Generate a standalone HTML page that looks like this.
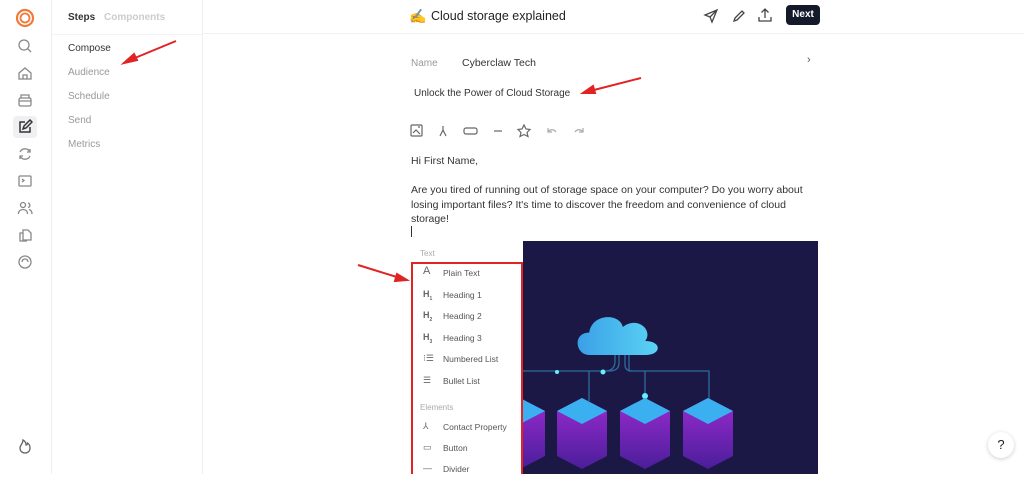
<!DOCTYPE html>
<html><head><meta charset="utf-8"><style>
*{margin:0;padding:0;box-sizing:border-box}
body{width:1024px;height:474px;overflow:hidden;background:#fff;font-family:"Liberation Sans",sans-serif;position:relative;color:#222}
.abs{position:absolute}
.rail{left:0;top:0;width:52px;height:474px;border-right:1px solid #eee;background:#fff}
.ri{position:absolute;left:17px;width:16px;height:16px}
.steps{left:52px;top:0;width:151px;height:474px;border-right:1px solid #eee}
.s{position:absolute;left:16px;font-size:10px;color:#999}
.hdr{left:203px;top:0;right:0;height:34px;border-bottom:1px solid #f0f0f0}
.t{font-size:11px;color:#333}
.mi{position:absolute;left:0;width:110px;font-size:8.5px;color:#555;height:20px}
.mi span{position:absolute;left:33px;top:5px}
.mi i{position:absolute;left:13px;top:4px;font-style:normal;font-size:9px;color:#666;font-weight:bold}
</style></head><body>
<div class="abs rail">
 <svg class="ri" style="top:8px;left:15px;width:20px;height:20px" viewBox="0 0 20 20"><circle cx="10" cy="10" r="8" fill="none" stroke="#f07a3a" stroke-width="2.2"/><circle cx="10" cy="10" r="4.5" fill="none" stroke="#f07a3a" stroke-width="1.8"/></svg>
 <svg class="ri" style="top:38px" viewBox="0 0 16 16" fill="none" stroke="#888" stroke-width="1.3"><circle cx="7" cy="7" r="5"/><path d="M11 11l3 3"/></svg>
 <svg class="ri" style="top:65px" viewBox="0 0 16 16" fill="none" stroke="#888" stroke-width="1.3"><path d="M2 8l6-5 6 5v6H2z M6 14v-4h4v4"/></svg>
 <svg class="ri" style="top:92px" viewBox="0 0 16 16" fill="none" stroke="#888" stroke-width="1.3"><rect x="2" y="6" width="12" height="8" rx="1.5"/><path d="M4 6V3h8v3M2 9h12"/></svg>
 <div class="abs" style="left:13px;top:116px;width:24px;height:22px;background:#f0f0f3;border-radius:4px"></div>
 <svg class="ri" style="top:119px" viewBox="0 0 16 16" fill="none" stroke="#333" stroke-width="1.5"><path d="M8 3H3v10h10V8M6 10l1-3 6-6 2 2-6 6z"/></svg>
 <svg class="ri" style="top:146px" viewBox="0 0 16 16" fill="none" stroke="#888" stroke-width="1.3"><path d="M13 6A5.5 5.5 0 0 0 3 6M3 10a5.5 5.5 0 0 0 10 0M13 3v3h-3M3 13v-3h3"/></svg>
 <svg class="ri" style="top:173px" viewBox="0 0 16 16" fill="none" stroke="#888" stroke-width="1.3"><rect x="2" y="3" width="12" height="10" rx="1"/><path d="M5 6l2 1.5L5 9"/></svg>
 <svg class="ri" style="top:200px" viewBox="0 0 16 16" fill="none" stroke="#888" stroke-width="1.3"><circle cx="6" cy="5" r="2.5"/><path d="M1.5 14c0-3 2-4.5 4.5-4.5S10.5 11 10.5 14M11 3a2.3 2.3 0 0 1 0 4.5M12 9.5c2 .5 3 2 3 4.5"/></svg>
 <svg class="ri" style="top:227px" viewBox="0 0 16 16" fill="none" stroke="#888" stroke-width="1.3"><path d="M6 3h5l3 3v7H6zM10 14H3V6h3"/></svg>
 <svg class="ri" style="top:254px" viewBox="0 0 16 16" fill="none" stroke="#888" stroke-width="1.3"><circle cx="8" cy="8" r="6"/><path d="M5 8a3 3 0 0 1 6 0"/></svg>
 <svg class="ri" style="top:438px" viewBox="0 0 16 16" fill="none" stroke="#666" stroke-width="1.3"><path d="M8 15c-3 0-5-2-5-5 0-3 3-4 3-8 2 1 3 3 3 5 1 0 1.5-1 1.5-2 1.5 1 2.5 3 2.5 5 0 3-2 5-5 5z"/></svg>
</div>
<div class="abs steps">
 <div class="s" style="top:12px;color:#333;font-weight:bold">Steps <span style="color:#ccc;margin-left:6px;font-weight:bold">Components</span></div>
 <div class="abs" style="left:0;top:34px;width:151px;border-top:1px solid #f3f3f3"></div>
 <div class="s" style="top:43px;color:#333">Compose</div>
 <div class="s" style="top:67px">Audience</div>
 <div class="s" style="top:91px">Schedule</div>
 <div class="s" style="top:115px">Send</div>
 <div class="s" style="top:139px">Metrics</div>
</div>
<div class="abs hdr"></div>
<div class="abs" style="left:409px;top:8px;font-size:14px;">✍</div>
<div class="abs" style="left:431px;top:9px;font-size:12.5px;color:#222">Cloud storage explained</div>
<svg class="abs" style="left:703px;top:8px" width="16" height="16" viewBox="0 0 16 16" fill="none" stroke="#444" stroke-width="1.3"><path d="M14 2L2 7l5 2 2 5z M7 9l7-7"/></svg>
<svg class="abs" style="left:731px;top:8px" width="16" height="16" viewBox="0 0 16 16" fill="none" stroke="#444" stroke-width="1.3"><path d="M3 13l3-1 7-7-2-2-7 7z"/></svg>
<svg class="abs" style="left:757px;top:7px" width="16" height="16" viewBox="0 0 16 16" fill="none" stroke="#444" stroke-width="1.3"><path d="M8 11V2M4.5 5.5L8 2l3.5 3.5M2 10v4h12v-4"/></svg>
<div class="abs" style="left:786px;top:5px;width:34px;height:20px;background:#141a2a;border-radius:4px;color:#fff;font-size:10px;font-weight:bold;text-align:center;line-height:20px">Next</div>
<div class="abs" style="left:411px;top:58px;font-size:10px;color:#999">Name</div>
<div class="abs t" style="left:462px;top:57px;font-size:10.5px">Cyberclaw Tech</div>
<div class="abs" style="left:807px;top:54px;font-size:11px;color:#555">›</div>
<div class="abs t" style="left:414px;top:88px;font-size:10px">Unlock the Power of Cloud Storage</div>
<div class="abs" style="left:410px;top:123px;font-size:11px;color:#666;letter-spacing:0">
<svg width="180" height="16" viewBox="0 0 180 16" fill="none" stroke="#666" stroke-width="1.2"><rect x="1" y="2" width="11" height="11" rx="1"/><path d="M3 10l3-3 4 4M8 4h2"/><path d="M33 3v4l-3 6M33 7l3 6"/><rect x="54" y="5" width="13" height="6" rx="2"/><path d="M84 8h8"/><path d="M114 2l2 4 4 .5-3 3 1 4-4-2-4 2 1-4-3-3 4-.5z"/><path d="M138 9c2-3 6-3 8 0M138 5v4h4" stroke="#aaa"/><path d="M173 9c-2-3-6-3-8 0M173 5v4h-4" stroke="#aaa"/></svg></div>
<div class="abs t" style="left:411px;top:155px;font-size:10.5px">Hi First Name,</div>
<div class="abs t" style="left:411px;top:183px;width:400px;font-size:10.5px;line-height:14.5px">Are you tired of running out of storage space on your computer? Do you worry about losing important files? It's time to discover the freedom and convenience of cloud storage!</div>
<div class="abs" style="left:411px;top:226px;width:1px;height:11px;background:#333"></div>
<!-- image -->
<div class="abs" style="left:495px;top:241px;width:323px;height:233px;background:#1b1846;overflow:hidden">
<svg width="323" height="233" viewBox="0 0 323 233">
<defs><linearGradient id="c" x1="0" x2="1"><stop offset="0" stop-color="#3aa0e6"/><stop offset="1" stop-color="#5ad3f5"/></linearGradient>
<linearGradient id="p" x1="0" y1="0" x2="0" y2="1"><stop offset="0" stop-color="#9a2bd0"/><stop offset="1" stop-color="#4a1e9a"/></linearGradient></defs>
<g stroke="#2e6c9a" stroke-width="1.3" fill="none"><path d="M0 130h110q10 0 10-10v-8M124 112v10q0 8-10 8h-20v30"/><path d="M130 112v12q0 6 8 6h12v25M134 112v18h80v28"/></g>
<path d="M83 110c-10 0-12-16 0-16 2-14 22-14 24-4 10-8 22 2 16 10 12 0 12 10 0 10z" fill="url(#c)" transform="translate(-22,-40) scale(1.4)"/>
<circle cx="150" cy="155" r="3" fill="#6ef"/><circle cx="62" cy="131" r="2" fill="#6ef"/><circle cx="108" cy="131" r="2.5" fill="#6ef"/>
<g id="sv"><path d="M62 170l25-13 25 13v45l-25 13-25-13z" fill="url(#p)"/><path d="M62 170l25-13 25 13-25 13z" fill="#3ab0f0"/></g>
<use href="#sv" x="63"/><use href="#sv" x="126"/><use href="#sv" x="-62"/>
</svg></div>
<!-- menu -->
<div class="abs" style="left:410px;top:240px;width:113px;height:234px;background:#fff">
 <div class="abs" style="left:10px;top:9px;font-size:8px;color:#aaa">Text</div>
 <div class="abs" style="left:1px;top:22px;width:112px;height:212px;border:2px solid #e02424;border-bottom:none"></div>
 <div class="mi" style="top:23px"><i style="font-weight:normal;font-size:11px;top:2px">A</i><span>Plain Text</span></div>
 <div class="mi" style="top:45px"><i>H<sub style="font-size:5px">1</sub></i><span>Heading 1</span></div>
 <div class="mi" style="top:66px"><i>H<sub style="font-size:5px">2</sub></i><span>Heading 2</span></div>
 <div class="mi" style="top:88px"><i>H<sub style="font-size:5px">3</sub></i><span>Heading 3</span></div>
 <div class="mi" style="top:109px"><i style="font-weight:normal">⁝☰</i><span>Numbered List</span></div>
 <div class="mi" style="top:131px"><i style="font-weight:normal">☰</i><span>Bullet List</span></div>
 <div class="abs" style="left:10px;top:163px;font-size:8px;color:#aaa">Elements</div>
 <div class="mi" style="top:177px"><i style="font-weight:normal">⅄</i><span>Contact Property</span></div>
 <div class="mi" style="top:198px"><i style="font-weight:normal">▭</i><span>Button</span></div>
 <div class="mi" style="top:219px"><i style="font-weight:normal">—</i><span>Divider</span></div>
</div>
<!-- arrows -->
<svg class="abs" style="left:0;top:0" width="1024" height="474"><g stroke="#e02424" stroke-width="2" fill="#e02424">
<path d="M176 41L130 60" /><path d="M124 63l10-9 3 6z"/>
<path d="M641 78L590 91"/><path d="M583 93l10-7 2 7z"/>
<path d="M358 265L400 278"/><path d="M407 280l-12 1 2-7z"/></g></svg>
<div class="abs" style="left:988px;top:432px;width:26px;height:26px;border-radius:50%;background:#fff;box-shadow:0 1px 4px rgba(0,0,0,.2);text-align:center;line-height:26px;font-size:13px;color:#222">?</div>
</body></html>
